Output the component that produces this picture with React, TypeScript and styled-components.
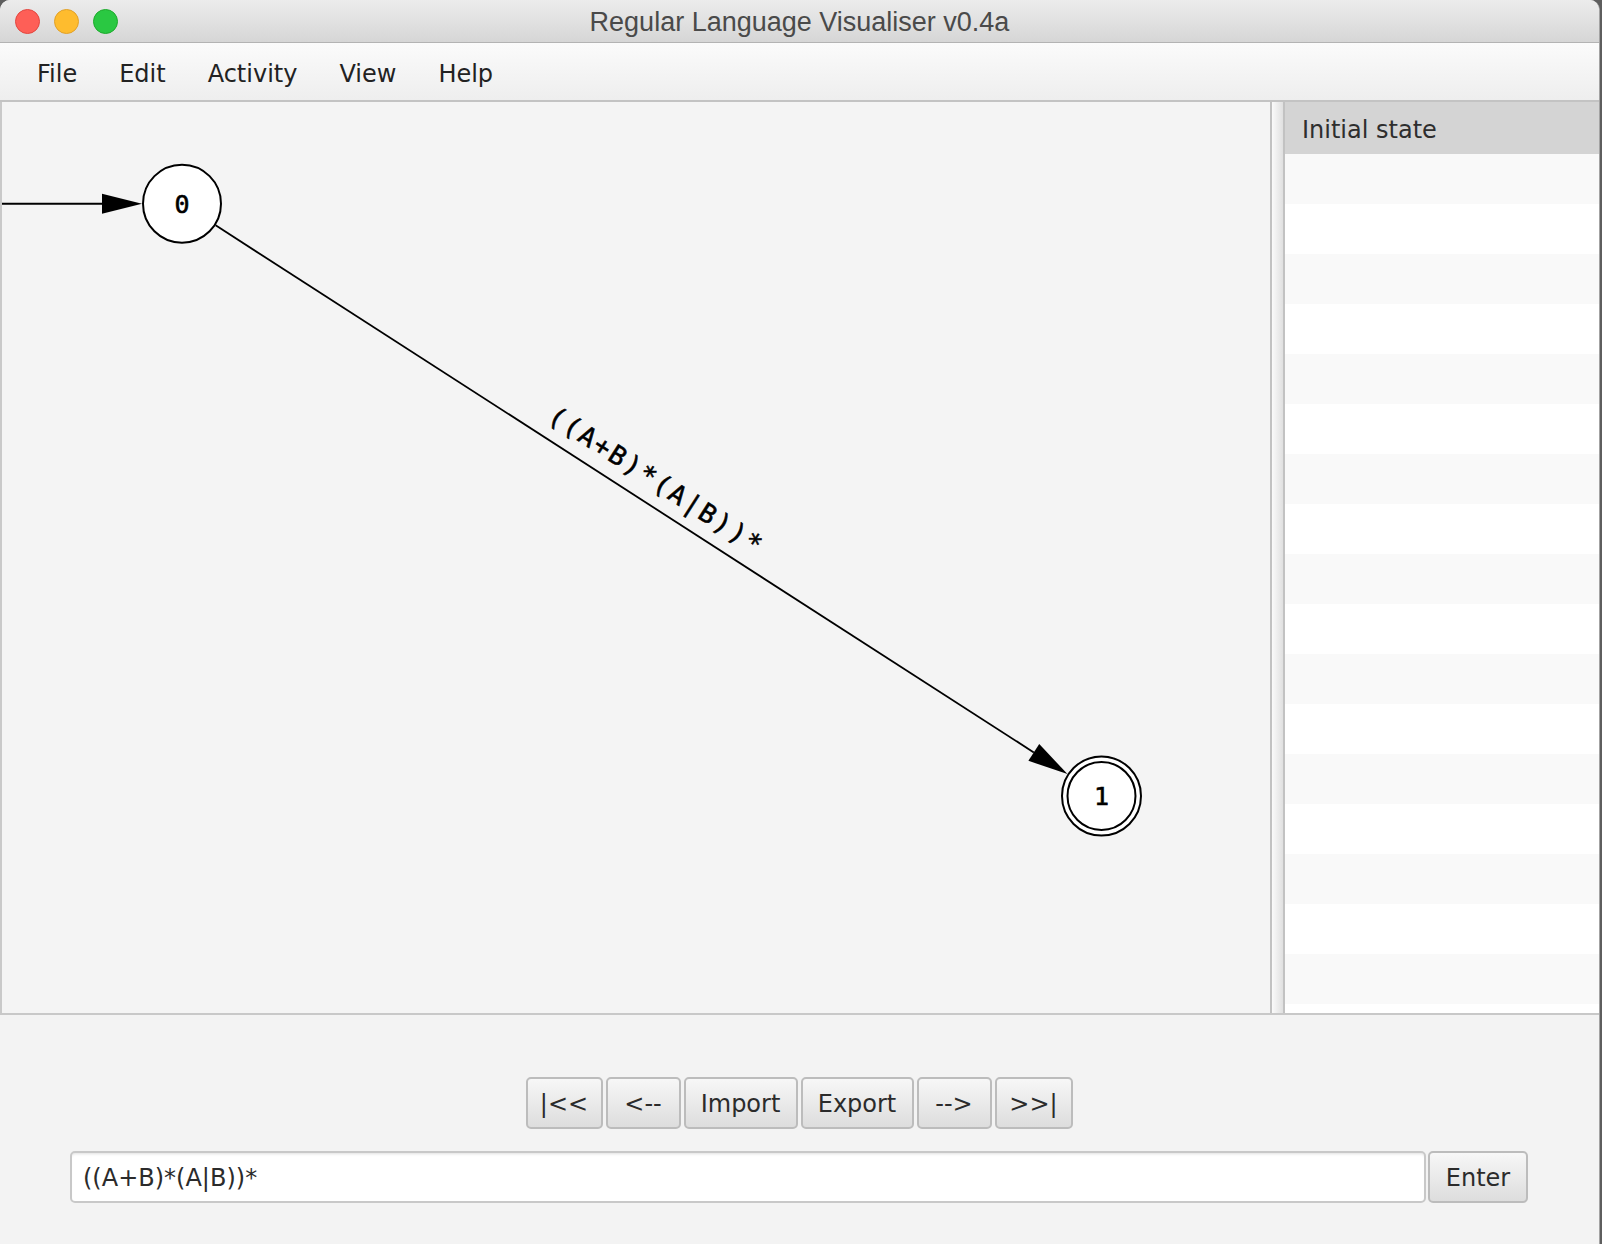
import React from 'react';
import styled, { createGlobalStyle } from 'styled-components';

const GlobalStyles = createGlobalStyle`
html,
body {
  margin: 0;
  padding: 0;
  background: #5e5e5e;
  overflow: hidden;
}

* {
  box-sizing: border-box;
}
`;

const uiFont = `'DejaVu Sans', 'Noto Sans', sans-serif`;

const Window = styled.div`
  width: 1600px;
  height: 1244px;
  display: flex;
  flex-direction: column;
  background: #f3f3f3;
  border-right: 1px solid #a3a3a3;
  border-radius: 10px 10px 0 0;
  overflow: hidden;
  font-family: ${uiFont};
`;

const TitleBar = styled.div`
  height: 43px;
  flex: 0 0 auto;
  display: grid;
  grid-template-columns: 1fr auto 1fr;
  align-items: center;
  padding: 0 15px;
  background: linear-gradient(#ececec, #d6d6d6);
  border-bottom: 1px solid #b3b3b3;
`;

const Lights = styled.div`
  display: flex;
  gap: 14px;
`;

const Light = styled.span<{ $fill: string; $edge: string }>`
  width: 25px;
  height: 25px;
  border-radius: 50%;
  background: ${(p) => p.$fill};
  border: 1px solid ${(p) => p.$edge};
`;

const Title = styled.div`
  font-family: 'Liberation Sans', Arial, sans-serif;
  font-size: 27px;
  color: #4a4a4a;
  padding-top: 2px;
`;

const MenuBar = styled.div`
  height: 59px;
  flex: 0 0 auto;
  display: flex;
  align-items: center;
  padding: 5px 0 0 16px;
  background: linear-gradient(#fbfbfb, #eeeeee);
  border-bottom: 2px solid #c3c3c3;
`;

const MenuItem = styled.span`
  padding: 0 21px;
  font-size: 24px;
  color: #222;
`;

const Main = styled.div`
  height: 913px;
  flex: 0 0 auto;
  display: flex;
  border-bottom: 2px solid #c8c8c8;
`;

const Canvas = styled.div`
  width: 1270px;
  flex: 0 0 auto;
  background: #f4f4f4;
  border-left: 2px solid #c9c9c9;

  svg {
    display: block;
    width: 100%;
    height: 100%;
  }
`;

const Divider = styled.div`
  width: 15px;
  flex: 0 0 auto;
  border-left: 2px solid #c2c2c2;
  border-right: 2px solid #c2c2c2;
  background: linear-gradient(to right, #fafafa, #e0e0e0);
`;

const StepList = styled.div`
  flex: 1;
  display: flex;
  flex-direction: column;
  overflow: hidden;
  background: #fff;
`;

const ListHeader = styled.div`
  height: 52px;
  flex: 0 0 auto;
  display: flex;
  align-items: center;
  padding: 3px 0 0 17px;
  background: #d4d4d4;
  font-size: 24px;
  color: #2e2e2e;
`;

const ListRow = styled.div<{ $odd: boolean }>`
  height: 50px;
  flex: 0 0 auto;
  background: ${(p) => (p.$odd ? '#f9f9f9' : '#ffffff')};
`;

const Controls = styled.div`
  flex: 1;
  display: flex;
  flex-direction: column;
  align-items: center;
  padding: 62px 71px 0 70px;
  gap: 22px;
`;

const StepButtons = styled.div`
  display: flex;
  gap: 3px;
`;

const Button = styled.button<{ $w: number }>`
  width: ${(p) => p.$w}px;
  height: 52px;
  padding: 2px 0 0;
  border: 2px solid #bcbcbc;
  border-radius: 5px;
  background: linear-gradient(#f7f7f7, #dddddd);
  font-family: ${uiFont};
  font-size: 24px;
  color: #2b2b2b;
`;

const InputRow = styled.div`
  align-self: stretch;
  display: flex;
  gap: 2px;
`;

const RegexField = styled.input`
  flex: 1;
  height: 52px;
  padding: 2px 0 0 11px;
  border: 2px solid #c8c8c8;
  border-radius: 5px;
  background: #fff;
  box-shadow: inset 0 3px 3px -2px rgba(0, 0, 0, 0.12);
  font-family: ${uiFont};
  font-size: 24px;
  color: #2b2b2b;
  outline: none;
`;

type Pt = { x: number; y: number };

const nodes = {
  q0: { x: 180, y: 101.7, r: 40 },
  q1: { x: 1099.5, y: 694, r: 40.5 },
};

const arrowHead = (tip: Pt, ux: number, uy: number, len = 40, half = 10) => {
  const bx = tip.x - ux * len;
  const by = tip.y - uy * len;
  return {
    base: { x: bx, y: by },
    points: `${tip.x},${tip.y} ${bx - uy * half},${by + ux * half} ${bx + uy * half},${by - ux * half}`,
  };
};

const Diagram = () => {
  const { q0, q1 } = nodes;
  const dx = q1.x - q0.x;
  const dy = q1.y - q0.y;
  const len = Math.hypot(dx, dy);
  const ux = dx / len;
  const uy = dy / len;
  const start = { x: q0.x + ux * q0.r, y: q0.y + uy * q0.r };
  const tip = { x: q1.x - ux * q1.r, y: q1.y - uy * q1.r };
  const edge = arrowHead(tip, ux, uy);
  const init = arrowHead({ x: q0.x - q0.r, y: q0.y }, 1, 0);
  const angle = (Math.atan2(dy, dx) * 180) / Math.PI;
  const mid = { x: (q0.x + q1.x) / 2, y: (q0.y + q1.y) / 2 };

  return (
    <svg>
      <g stroke="#000" fill="none">
        <line x1={0} y1={q0.y} x2={init.base.x} y2={q0.y} strokeWidth={2} />
        <line x1={start.x} y1={start.y} x2={edge.base.x} y2={edge.base.y} strokeWidth={1.8} />
      </g>
      <polygon points={init.points} fill="#000" />
      <polygon points={edge.points} fill="#000" />

      <circle cx={q0.x} cy={q0.y} r={q0.r - 1} fill="#fff" stroke="#000" strokeWidth={2} />
      <circle cx={q1.x} cy={q1.y} r={q1.r - 1} fill="#fff" stroke="#000" strokeWidth={2} />
      <circle cx={q1.x} cy={q1.y} r={34} fill="none" stroke="#000" strokeWidth={2} />

      <g
        fontFamily="'DejaVu Sans Mono', 'Liberation Mono', monospace"
        fill="#000"
        stroke="#000"
        strokeWidth={0.6}
        textAnchor="middle"
      >
        <text x={q0.x} y={q0.y + 9} fontSize={25}>0</text>
        <text x={q1.x} y={q1.y + 9} fontSize={25}>1</text>
        <text
          transform={`translate(${mid.x + 2} ${mid.y}) rotate(${angle})`}
          y={-14}
          fontSize={26}
          letterSpacing={2.2}
        >
          ((A+B)*(A|B))*
        </text>
      </g>
    </svg>
  );
};

const menus = ['File', 'Edit', 'Activity', 'View', 'Help'];

const steps = [
  { label: '|<<', w: 77 },
  { label: '<--', w: 75 },
  { label: 'Import', w: 114 },
  { label: 'Export', w: 113 },
  { label: '-->', w: 75 },
  { label: '>>|', w: 78 },
];

const App = () => (
  <Window>
    <GlobalStyles />
    <TitleBar>
      <Lights>
        <Light $fill="#fe5f57" $edge="#e2463f" />
        <Light $fill="#febc2e" $edge="#e0a028" />
        <Light $fill="#2ac842" $edge="#1daa2c" />
      </Lights>
      <Title>Regular Language Visualiser v0.4a</Title>
      <span />
    </TitleBar>

    <MenuBar>
      {menus.map((m) => (
        <MenuItem key={m}>{m}</MenuItem>
      ))}
    </MenuBar>

    <Main>
      <Canvas>
        <Diagram />
      </Canvas>
      <Divider />
      <StepList>
        <ListHeader>Initial state</ListHeader>
        {Array.from({ length: 18 }, (_, i) => (
          <ListRow key={i} $odd={i % 2 === 0} />
        ))}
      </StepList>
    </Main>

    <Controls>
      <StepButtons>
        {steps.map((s) => (
          <Button key={s.label} $w={s.w}>
            {s.label}
          </Button>
        ))}
      </StepButtons>
      <InputRow>
        <RegexField defaultValue="((A+B)*(A|B))*" spellCheck={false} />
        <Button $w={100}>Enter</Button>
      </InputRow>
    </Controls>
  </Window>
);

export default App;
